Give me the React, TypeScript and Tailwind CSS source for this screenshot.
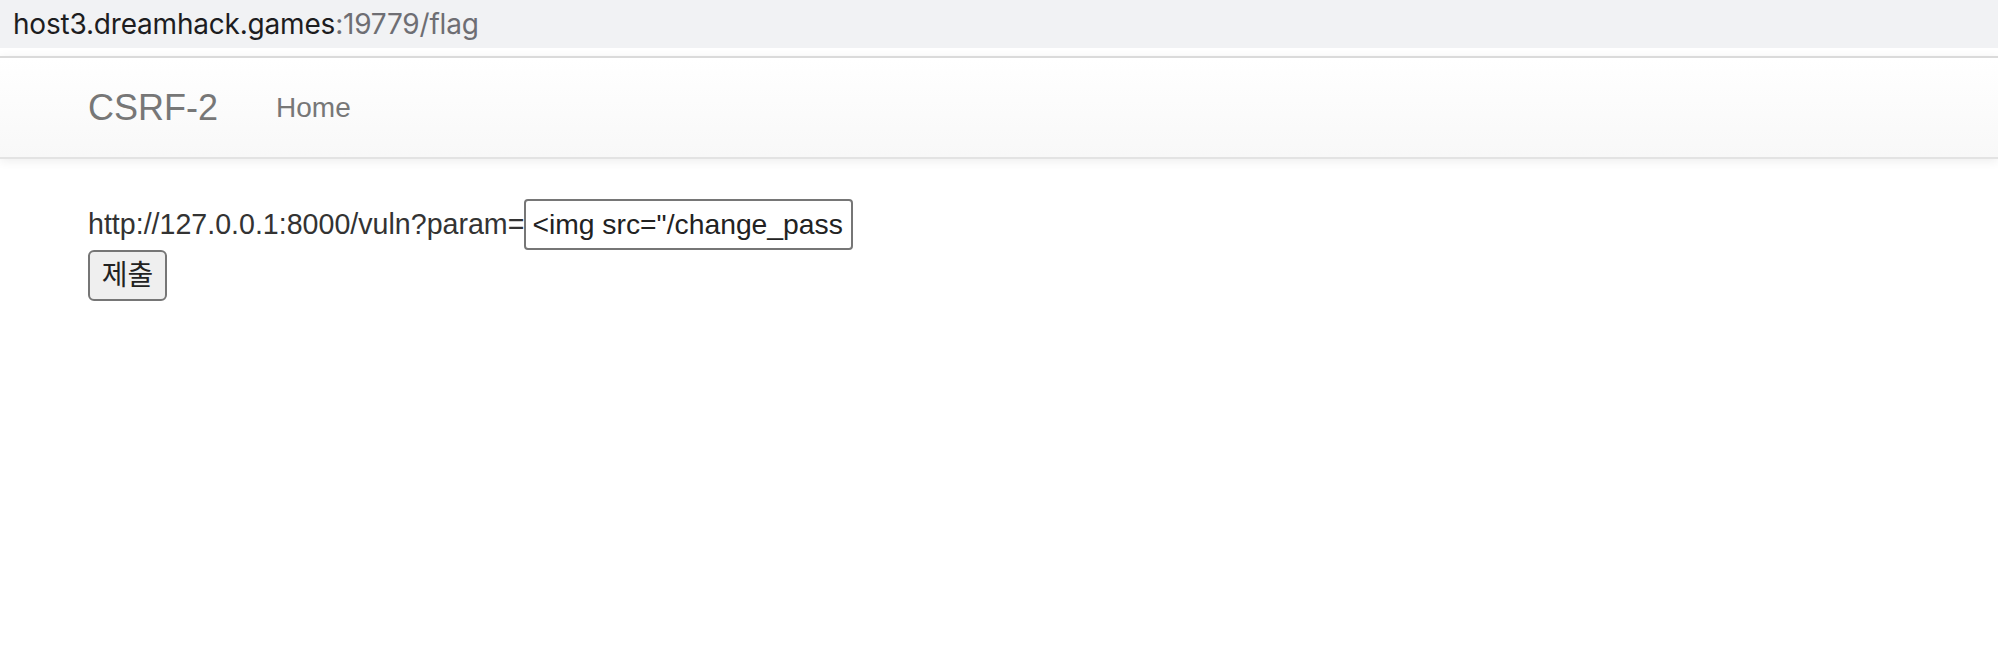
export default function App() {
  return (
    <div className="min-h-screen bg-white font-['Liberation_Sans','Noto_Sans_CJK_KR',sans-serif]">
      {/* browser address strip */}
      <div className="h-12 bg-[#f1f2f4] flex items-center pl-[13px] text-[28px] font-['Inter',sans-serif] tracking-[-0.2px]">
        <span className="text-[#1d1d1f]">host3.dreamhack.games</span>
        <span className="text-[#6e6e73]">:19779/flag</span>
      </div>
      <div className="h-2 bg-white" />

      {/* navbar */}
      <nav className="h-[103px] border-t-2 border-b-2 border-t-[#dadada] border-b-[#e3e3e3] bg-linear-to-b from-white to-[#f8f8f8] shadow-[0_2px_10px_rgba(0,0,0,0.075)] flex items-center pl-[88px]">
        <span className="text-[36px] text-[#777] pr-[58px]">CSRF-2</span>
        <span className="text-[28px] text-[#777]">Home</span>
      </nav>

      {/* form */}
      <main className="pt-10 pl-[88px] text-[28.6px] text-[#333]">
        <div className="flex items-center">
          <span>http://127.0.0.1:8000/vuln?param=</span>
          <input
            type="text"
            readOnly
            defaultValue={'<img src="/change_pass'}
            className="h-[51px] w-[329px] border-2 border-[#767676] rounded-[4px] px-[6px] text-[28.3px] text-[#222] bg-white outline-none font-['Liberation_Sans',sans-serif]"
          />
        </div>
        <button className="h-[51px] w-[79px] border-2 border-[#767676] rounded-[6px] bg-[#efefef] text-[28px] text-[#222] flex items-center justify-center font-['Liberation_Sans','Noto_Sans_CJK_KR',sans-serif]">
          제출
        </button>
      </main>
    </div>
  );
}
